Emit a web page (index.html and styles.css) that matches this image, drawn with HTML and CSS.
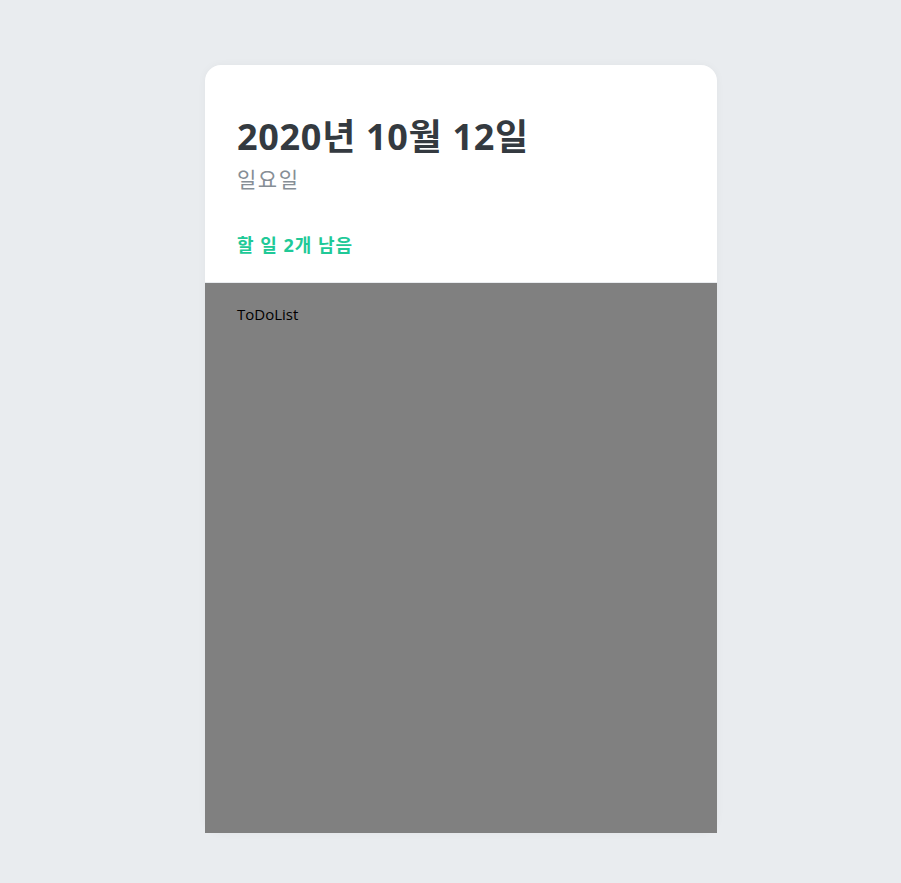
FILE: index.html
```html
<!DOCTYPE html>
<html lang="ko">
<head>
<meta charset="utf-8">
<title>Todo</title>
<link rel="stylesheet" href="styles.css">
</head>
<body>
<div class="template">
  <div class="head">
    <h1 class="date">2020년 10월 12일</h1>
    <div class="day">일요일</div>
    <div class="tasks-left">할 일 2개 남음</div>
  </div>
  <div class="list">ToDoList</div>
</div>
</body>
</html>
```
FILE: styles.css
```css
html, body {
  margin: 0;
  padding: 0;
}
body {
  background: #e9ecef;
  font-family: "Open Sans", "Noto Sans CJK KR", sans-serif;
}
.template {
  width: 512px;
  height: 768px;
  background: #fff;
  border-radius: 16px;
  box-shadow: 0 0 8px 0 rgba(0, 0, 0, 0.04);
  margin: 65px 0 32px 205px;
  display: flex;
  flex-direction: column;
}
.head {
  padding: 48px 32px 24px;
  border-bottom: 1px solid #e9ecef;
}
.date {
  margin: 0;
  font-size: 36px;
  line-height: 48px;
  font-weight: bold;
  letter-spacing: 0.7px;
  color: #343a40;
}
.day {
  margin-top: 4px;
  font-size: 21px;
  line-height: 28px;
  letter-spacing: 1.5px;
  color: #868e96;
}
.tasks-left {
  margin-top: 40px;
  font-size: 18px;
  line-height: 25px;
  font-weight: bold;
  letter-spacing: 1px;
  color: #20c997;
}
.list {
  flex: 1;
  background: #808080;
  padding: 20px 32px 48px;
  font-size: 15px;
  line-height: 22px;
  color: #000;
}
```
